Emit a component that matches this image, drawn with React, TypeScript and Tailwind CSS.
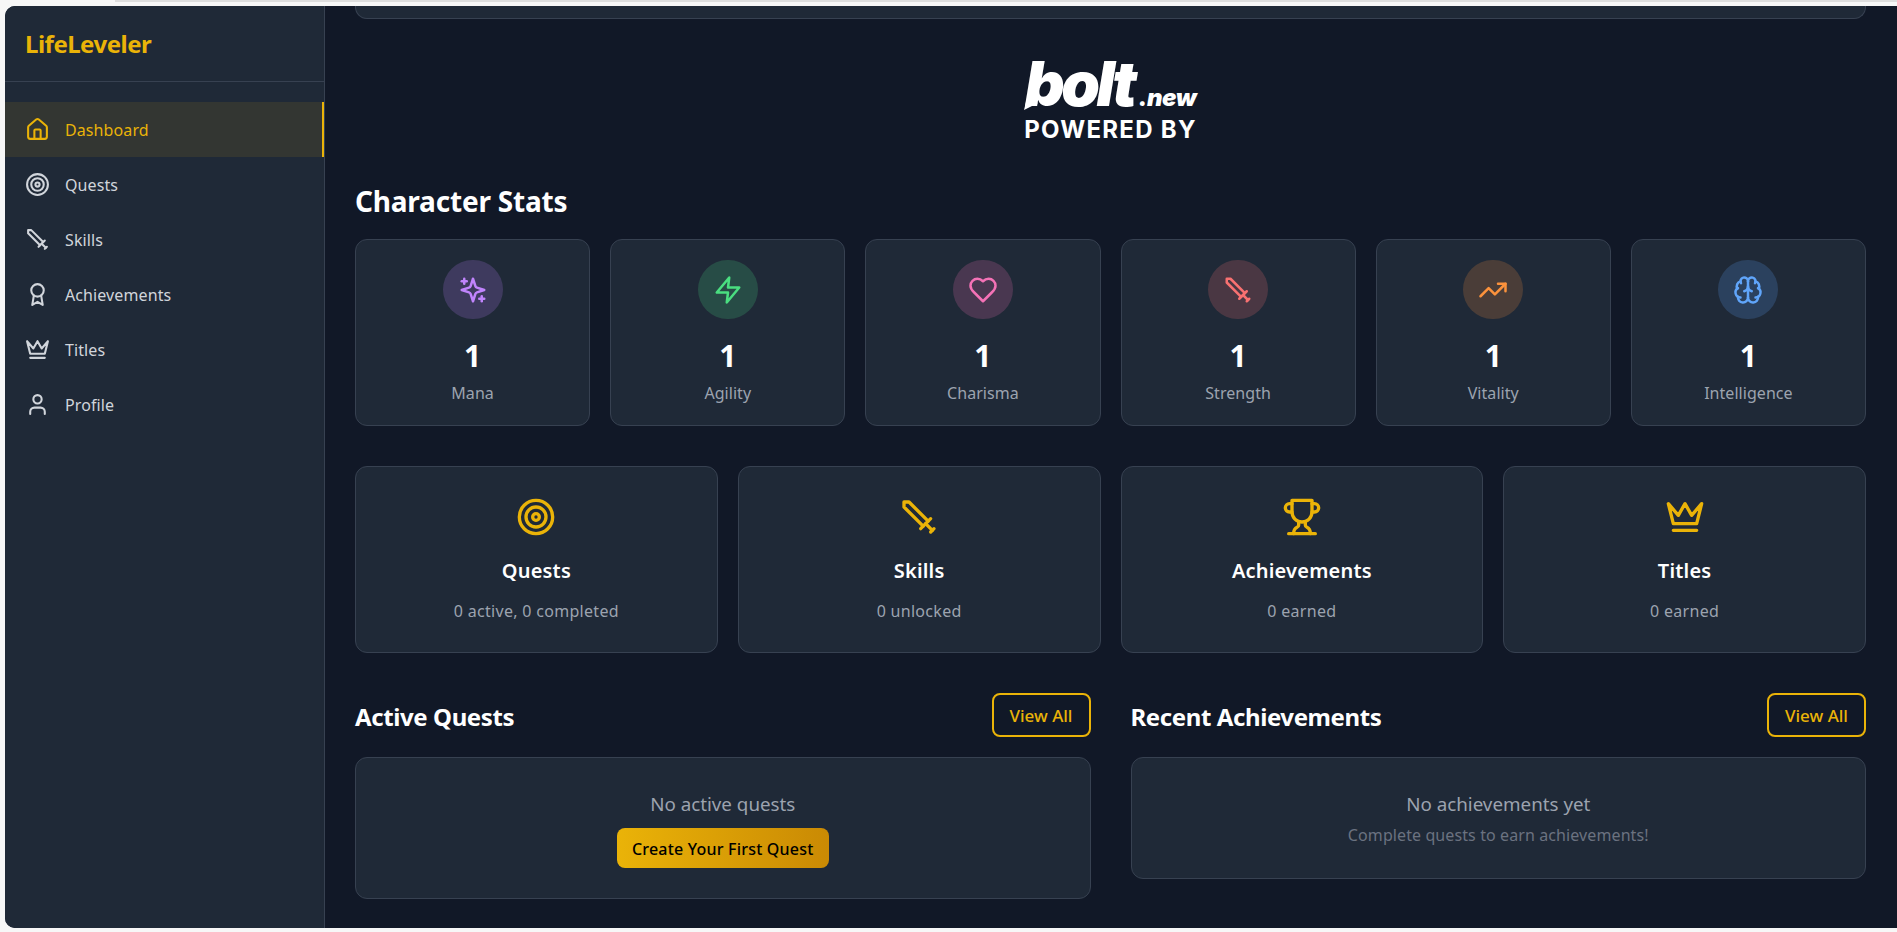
import { Brain, Target, TrendingUp, User, House } from 'lucide-react';
import type { ReactNode } from 'react';

function Ico({ size = 24, children, className }: { size?: number; children: ReactNode; className?: string }) {
  return (
    <svg
      width={size}
      height={size}
      viewBox="0 0 24 24"
      fill="none"
      stroke="currentColor"
      strokeWidth="2"
      strokeLinecap="round"
      strokeLinejoin="round"
      className={className}
    >
      {children}
    </svg>
  );
}

function SwordIcon({ size, className }: { size?: number; className?: string }) {
  return (
    <Ico size={size} className={className}>
      <polyline points="14.5 17.5 3 6 3 3 6 3 17.5 14.5" />
      <line x1="13" y1="19" x2="19" y2="13" />
      <line x1="16" y1="16" x2="20" y2="20" />
      <line x1="19" y1="21" x2="21" y2="19" />
    </Ico>
  );
}

function CrownIcon({ size, className }: { size?: number; className?: string }) {
  return (
    <Ico size={size} className={className}>
      <path d="m2 4 3 12h14l3-12-6 7-4-7-4 7-6-7zm3 16h14" />
    </Ico>
  );
}

function AwardIcon({ size, className }: { size?: number; className?: string }) {
  return (
    <Ico size={size} className={className}>
      <circle cx="12" cy="8" r="6" />
      <path d="M15.477 12.89 17 22l-5-3-5 3 1.523-9.11" />
    </Ico>
  );
}

function TrophyIcon({ size, className }: { size?: number; className?: string }) {
  return (
    <Ico size={size} className={className}>
      <path d="M6 9H4.5a2.5 2.5 0 0 1 0-5H6" />
      <path d="M18 9h1.5a2.5 2.5 0 0 0 0-5H18" />
      <path d="M4 22h16" />
      <path d="M10 14.66V17c0 .55-.47.98-.97 1.21C7.85 18.75 7 20.24 7 22" />
      <path d="M14 14.66V17c0 .55.47.98.97 1.21C16.15 18.75 17 20.24 17 22" />
      <path d="M18 2H6v7a6 6 0 0 0 12 0V2Z" />
    </Ico>
  );
}

function SparklesIcon({ size }: { size?: number }) {
  return (
    <Ico size={size}>
      <path d="m12 3-1.912 5.813a2 2 0 0 1-1.275 1.275L3 12l5.813 1.912a2 2 0 0 1 1.275 1.275L12 21l1.912-5.813a2 2 0 0 1 1.275-1.275L21 12l-5.813-1.912a2 2 0 0 1-1.275-1.275L12 3Z" />
      <path d="M5 3v4" />
      <path d="M19 17v4" />
      <path d="M3 5h4" />
      <path d="M17 19h4" />
    </Ico>
  );
}

function ZapIcon({ size }: { size?: number }) {
  return (
    <Ico size={size}>
      <polygon points="13 2 3 14 12 14 11 22 21 10 12 10 13 2" />
    </Ico>
  );
}

function HeartIcon({ size }: { size?: number }) {
  return (
    <Ico size={size}>
      <path d="M19 14c1.49-1.46 3-3.21 3-5.5A5.5 5.5 0 0 0 16.5 3c-1.76 0-3 .5-4.5 2-1.5-1.5-2.74-2-4.5-2A5.5 5.5 0 0 0 2 8.5c0 2.3 1.5 4.05 3 5.5l7 7Z" />
    </Ico>
  );
}

const navItems = [
  { label: 'Dashboard', icon: <House size={25} />, active: true },
  { label: 'Quests', icon: <Target size={25} /> },
  { label: 'Skills', icon: <SwordIcon size={25} /> },
  { label: 'Achievements', icon: <AwardIcon size={25} /> },
  { label: 'Titles', icon: <CrownIcon size={25} /> },
  { label: 'Profile', icon: <User size={25} /> },
];

const stats = [
  { label: 'Mana', icon: <SparklesIcon size={30} />, circle: 'bg-[#c084fc]/20 text-[#c084fc]' },
  { label: 'Agility', icon: <ZapIcon size={30} />, circle: 'bg-[#4ade80]/20 text-[#4ade80]' },
  { label: 'Charisma', icon: <HeartIcon size={30} />, circle: 'bg-[#f472b6]/20 text-[#f472b6]' },
  { label: 'Strength', icon: <SwordIcon size={30} />, circle: 'bg-[#f87171]/20 text-[#f87171]' },
  { label: 'Vitality', icon: <TrendingUp size={30} />, circle: 'bg-[#fb923c]/20 text-[#fb923c]' },
  { label: 'Intelligence', icon: <Brain size={30} />, circle: 'bg-[#60a5fa]/20 text-[#60a5fa]' },
];

const summaries = [
  { title: 'Quests', sub: '0 active, 0 completed', icon: <Target size={40} /> },
  { title: 'Skills', sub: '0 unlocked', icon: <SwordIcon size={40} /> },
  { title: 'Achievements', sub: '0 earned', icon: <TrophyIcon size={40} /> },
  { title: 'Titles', sub: '0 earned', icon: <CrownIcon size={40} /> },
];

function Sidebar() {
  return (
    <aside className="w-[320px] shrink-0 bg-[#1f2937] border-r border-[#374151]">
      <div className="h-[76px] pl-5 pt-[1px] flex items-center border-b border-[#374151]">
        <span className="text-[24px] font-bold text-[#eab308] tracking-[-0.5px]">LifeLeveler</span>
      </div>
      <nav className="py-5">
        {navItems.map(item => (
          <div
            key={item.label}
            className={
              item.active
                ? 'h-[55px] pl-5 flex items-center gap-[15px] text-[#eab308] bg-[#eab308]/10 border-r-2 border-[#eab308]'
                : 'h-[55px] pl-5 flex items-center gap-[15px] text-[#d1d5db]'
            }
          >
            {item.icon}
            <span className="text-[16px] tracking-[0.1px]">{item.label}</span>
          </div>
        ))}
      </nav>
    </aside>
  );
}

function BoltLogo() {
  return (
    <div className="h-[164px] flex flex-col items-center text-white pt-[36px]">
      <div className="relative flex items-baseline font-['Inter',sans-serif] italic font-black">
        <span className="text-[62px] leading-[58px] tracking-[-3.5px]">bolt</span>
        <span className="text-[24px] leading-[24px] tracking-[-0.5px] ml-[5px]">.new</span>
        {/* pointed tail of the b in the logo */}
        <svg width="14" height="12" viewBox="0 0 14 12" className="absolute left-[-1px] top-[43px]">
          <polygon points="3,0 14,5 0,12" fill="currentColor" />
        </svg>
      </div>
      <div className="mt-[3px] font-['Inter',sans-serif] font-bold text-[24px] leading-[28px] tracking-[1.3px]">POWERED BY</div>
    </div>
  );
}

function StatCard({ label, icon, circle }: { label: string; icon: ReactNode; circle: string }) {
  return (
    <div className="h-[187px] bg-[#1f2937] border border-[#374151] rounded-xl p-5 flex flex-col items-center">
      <div className={`w-[60px] h-[60px] rounded-full flex items-center justify-center ${circle}`}>{icon}</div>
      <div className="mt-[15px] text-[30px] leading-[44px] font-bold text-white">1</div>
      <div className="mt-[3px] text-[16px] leading-[24px] text-[#9ca3af] tracking-[0.05px]">{label}</div>
    </div>
  );
}

function SummaryCard({ title, sub, icon }: { title: string; sub: string; icon: ReactNode }) {
  return (
    <div className="h-[187px] bg-[#1f2937] border border-[#374151] rounded-xl pt-[30px] flex flex-col items-center">
      <div className="text-[#eab308]">{icon}</div>
      <div className="mt-[20px] text-[20px] leading-[28px] font-semibold text-white tracking-[0.2px]">{title}</div>
      <div className="mt-[14px] text-[16px] leading-[24px] text-[#9ca3af] tracking-[0.3px]">{sub}</div>
    </div>
  );
}

function SectionHead({ title }: { title: string }) {
  return (
    <div className="flex items-center justify-between h-[44px] mb-5">
      <h2 className="pt-[3px] text-[24px] font-bold text-white tracking-[-0.4px]">{title}</h2>
      <button className="w-[99px] h-[44px] pt-[2px] border-2 border-[#eab308] rounded-lg text-[17px] font-medium text-[#eab308]">
        View All
      </button>
    </div>
  );
}

export default function App() {
  return (
    <div className="h-screen w-full overflow-hidden bg-[#f7f7f7] font-['Noto_Sans',sans-serif]">
      <div className="h-[6px]">
        <div className="h-[2px] ml-[115px] bg-[#dedede]" />
      </div>
      <div className="h-[922px] ml-[5px] flex rounded-l-[10px] overflow-hidden bg-[#111827]">
        <Sidebar />
        <main className="flex-1 min-w-0 pl-[30px] pr-[31px]">
          <div className="h-[13px] bg-[#1f2937] border border-t-0 border-[#374151] rounded-b-xl" />
          <BoltLogo />
          <h2 className="h-[36px] mb-5 text-[28px] leading-[36px] font-bold text-white tracking-[-0.2px]">Character Stats</h2>
          <div className="grid grid-cols-6 gap-5 mb-10">
            {stats.map(s => (
              <StatCard key={s.label} {...s} />
            ))}
          </div>
          <div className="grid grid-cols-4 gap-5 mb-10">
            {summaries.map(s => (
              <SummaryCard key={s.title} {...s} />
            ))}
          </div>
          <div className="grid grid-cols-2 gap-10 items-start">
            <div>
              <SectionHead title="Active Quests" />
              <div className="h-[142px] bg-[#1f2937] border border-[#374151] rounded-xl pt-[32px] flex flex-col items-center">
                <p className="text-[18.8px] leading-[28px] text-[#9ca3af]">No active quests</p>
                <button className="mt-[10px] w-[212px] h-[40px] pt-[2px] rounded-lg bg-gradient-to-r from-[#eab308] to-[#ca8a04] text-[16px] font-medium text-black tracking-[0.2px]">
                  Create Your First Quest
                </button>
              </div>
            </div>
            <div>
              <SectionHead title="Recent Achievements" />
              <div className="h-[122px] bg-[#1f2937] border border-[#374151] rounded-xl pt-[32px] flex flex-col items-center">
                <p className="text-[18.8px] leading-[28px] text-[#9ca3af]">No achievements yet</p>
                <p className="mt-[5px] text-[16px] leading-[24px] text-[#6b7280] tracking-[0.1px]">Complete quests to earn achievements!</p>
              </div>
            </div>
          </div>
        </main>
      </div>
    </div>
  );
}
